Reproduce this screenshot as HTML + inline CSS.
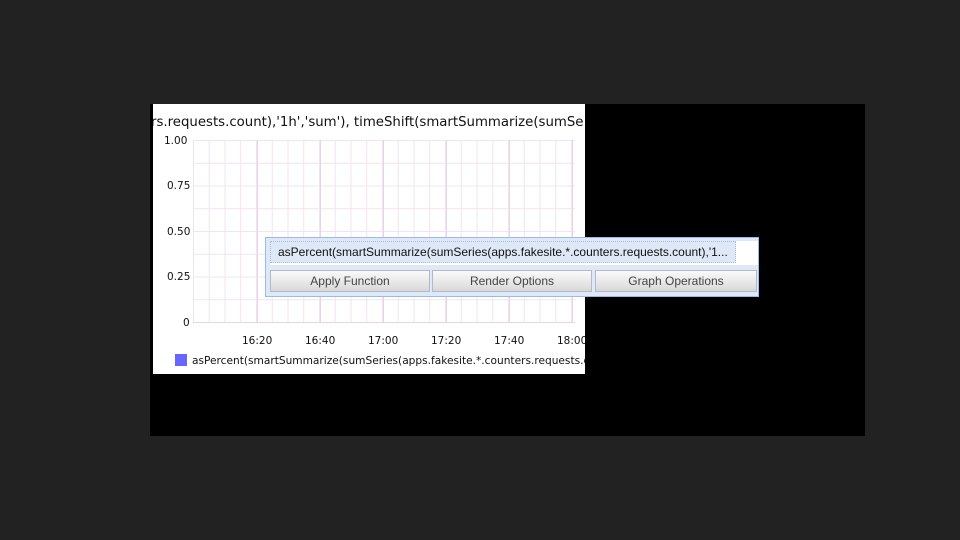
<!DOCTYPE html>
<html><head><style>
body{margin:0;width:960px;height:540px;background:#222;position:relative;overflow:hidden;font-family:"DejaVu Sans","Liberation Sans",sans-serif}
.blk{position:absolute;left:150px;top:104px;width:715px;height:332px;background:#000}
.wh{position:absolute;left:153px;top:104px;width:432px;height:270px;background:#fff;overflow:hidden}
.t{position:absolute;white-space:nowrap;color:#111}
.pop{position:absolute;left:265px;top:237px;width:492px;height:58px;background:#dfe8f6;border:1px solid #99bbe8;font-family:"Liberation Sans",sans-serif;font-size:12px;color:#333}
.inp{position:absolute;left:4px;top:3px;width:466px;height:22px;background:#dfe8f6;border:1px dotted #a3bde3;box-sizing:border-box;line-height:21px;padding-left:7px;color:#111}
.inpw{position:absolute;left:4px;top:3px;width:488px;height:24px;background:#fff}
.btn{position:absolute;top:32px;height:22px;width:160px;box-sizing:border-box;border:1px solid #b5b8c8;background:linear-gradient(#fafafa,#e6e6e6 60%,#d8d8d8);text-align:center;line-height:21px;color:#444}
</style></head><body>
<div class="blk"></div>
<div class="wh">
<svg width="432" height="270" style="position:absolute;left:0;top:0">
<defs><pattern id="g" x="40" y="36" width="15.75" height="22.75" patternUnits="userSpaceOnUse"><path d="M0.5 0V22.75M0 0.5H15.75" stroke="#f0e4ef" stroke-width="1" fill="none"/></pattern></defs>
<rect x="40" y="36" width="382" height="182" fill="url(#g)"/>
<g stroke="#ead2e8" stroke-width="1">
<line x1="104.5" y1="36" x2="104.5" y2="218"/><line x1="167.5" y1="36" x2="167.5" y2="218"/><line x1="230.5" y1="36" x2="230.5" y2="218"/><line x1="293.5" y1="36" x2="293.5" y2="218"/><line x1="356.5" y1="36" x2="356.5" y2="218"/><line x1="419.5" y1="36" x2="419.5" y2="218"/>
<line x1="40" y1="218.5" x2="422" y2="218.5"/>
</g>
<rect x="22" y="250" width="12" height="12" fill="#6666ff"/>
</svg>
<div class="t" style="left:-2px;top:11px;font-size:13.3px">rs.requests.count),'1h','sum'), timeShift(smartSummarize(sumSe</div>
<div class="t" style="left:11px;top:31px;font-size:10.5px">1.00</div>
<div class="t" style="left:14px;top:76px;font-size:10.5px">0.75</div>
<div class="t" style="left:14px;top:122px;font-size:10.5px">0.50</div>
<div class="t" style="left:14px;top:167px;font-size:10.5px">0.25</div>
<div class="t" style="left:30px;top:213px;font-size:10.5px">0</div>
<div class="t" style="left:89px;top:231px;font-size:10.5px">16:20</div>
<div class="t" style="left:152px;top:231px;font-size:10.5px">16:40</div>
<div class="t" style="left:215px;top:231px;font-size:10.5px">17:00</div>
<div class="t" style="left:278px;top:231px;font-size:10.5px">17:20</div>
<div class="t" style="left:341px;top:231px;font-size:10.5px">17:40</div>
<div class="t" style="left:404px;top:231px;font-size:10.5px">18:00</div>
<div class="t" style="left:39px;top:251px;font-size:10.6px">asPercent(smartSummarize(sumSeries(apps.fakesite.*.counters.requests.count</div>
</div>
<div class="pop">
<div class="inpw"></div>
<div class="inp">asPercent(smartSummarize(sumSeries(apps.fakesite.*.counters.requests.count),'1...</div>
<div class="btn" style="left:4px">Apply Function</div>
<div class="btn" style="left:166px">Render Options</div>
<div class="btn" style="left:329px;width:162px">Graph Operations</div>
</div>
</body></html>
